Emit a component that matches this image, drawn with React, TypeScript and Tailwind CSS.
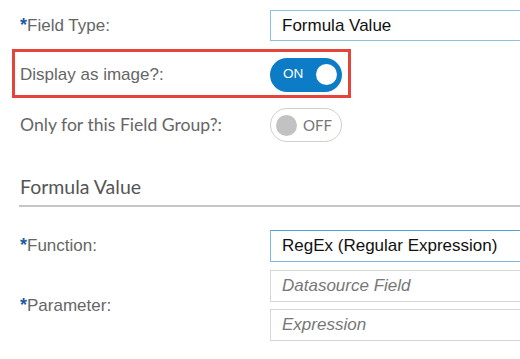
import React from "react";

const Star = () => <span className="text-[#1d5ca8] font-bold text-[18px] leading-none">*</span>;

export default function App() {
  return (
    <div className="w-[520px] h-[359px] overflow-hidden bg-white font-['Liberation_Sans',Arial,sans-serif]">
      <div className="pl-[12px]">
        {/* Field Type */}
        <div className="flex items-center mt-[10px] h-[31px]">
          <div className="w-[258px] shrink-0 pl-[8px] text-[17px] text-[#666]">
            <Star />Field Type:
          </div>
          <div className="w-[280px] shrink-0 h-[31px] border border-[#8cc1e6] pl-[11px] flex items-center text-[17px] text-[#111]">
            Formula Value
          </div>
        </div>

        {/* Display as image */}
        <div className="mt-[8px] w-[339px] h-[49px] border-[3px] border-[#e5443b] flex items-center pt-[2px]">
          <div className="w-[255px] shrink-0 pl-[5px] text-[17px] text-[#666]">Display as image?:</div>
          <div className="w-[72px] h-[34px] shrink-0 rounded-full bg-[#0b7cc5] flex items-center pl-[13px] pr-[5px] justify-between">
            <span className="text-white text-[13.5px]">ON</span>
            <span className="w-[21px] h-[21px] rounded-full bg-white" />
          </div>
        </div>

        {/* Only for this Field Group */}
        <div className="flex items-center mt-[10px] h-[34px]">
          <div className="w-[258px] shrink-0 pl-[8px] text-[17.6px] text-[#666] font-['Lato',sans-serif]">Only for this Field Group?:</div>
          <div className="w-[72px] h-[34px] shrink-0 rounded-full border border-[#cfcfcf] flex items-center pl-[5px] gap-[6px]">
            <span className="w-[21px] h-[21px] rounded-full bg-[#c2c2c2]" />
            <span className="text-[#777] text-[15px] font-['Lato',sans-serif]">OFF</span>
          </div>
        </div>

        {/* Heading */}
        <div className="mt-[33px] ml-[7px] pl-[1px] pb-[6px] border-b-2 border-[#c6c6c6] text-[19.5px] leading-[24px] text-[#555] font-['Lato',sans-serif]">
          Formula Value
        </div>

        {/* Function */}
        <div className="flex items-center mt-[23px] h-[32px]">
          <div className="w-[258px] shrink-0 pl-[8px] text-[17px] text-[#666]">
            <Star />Function:
          </div>
          <div className="w-[280px] shrink-0 h-[32px] border border-[#7cb9e3] border-t-[#4aa2dd] pl-[11px] flex items-center text-[17px] text-[#111]">
            RegEx (Regular Expression)
          </div>
        </div>

        {/* Parameter */}
        <div className="flex items-center mt-[8px]">
          <div className="w-[258px] shrink-0 pl-[8px] text-[17px] text-[#666]">
            <Star />Parameter:
          </div>
          <div className="flex flex-col gap-[7px] shrink-0">
            <div className="w-[280px] h-[32px] border border-[#d6d6d6] pl-[11px] flex items-center text-[17px] italic text-[#777]">
              Datasource Field
            </div>
            <div className="w-[280px] h-[32px] border border-[#d6d6d6] pl-[11px] flex items-center text-[17px] italic text-[#777]">
              Expression
            </div>
          </div>
        </div>
      </div>
    </div>
  );
}
